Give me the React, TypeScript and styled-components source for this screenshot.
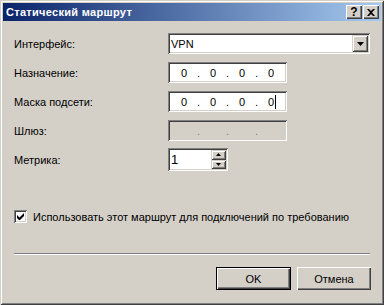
import styled, { createGlobalStyle } from 'styled-components';

const GlobalStyle = createGlobalStyle`
  html, body {
    margin: 0;
    padding: 0;
    background: #d4d0c8;
  }
  * {
    box-sizing: border-box;
  }
`;

const face = '#d4d0c8';

export default function App() {
  return (
    <>
      <GlobalStyle />
      <Window>
        <TitleBar>
          <Title>Статический маршрут</Title>
          <CaptionButton>
            <HelpGlyph>?</HelpGlyph>
          </CaptionButton>
          <CaptionButton>
            <svg width="8" height="7" viewBox="0 0 8 7">
              <path d="M0 0h2l2 2 2-2h2L5 3.5 8 7H6L4 5 2 7H0l3-3.5z" fill="#000" />
            </svg>
          </CaptionButton>
        </TitleBar>

        <Body>
          <Form>
            <Label>Интерфейс:</Label>
            <Combo>
              <ComboText>VPN</ComboText>
              <DropButton>
                <svg width="7" height="4" viewBox="0 0 7 4">
                  <path d="M0 0h7L3.5 4z" fill="#000" />
                </svg>
              </DropButton>
            </Combo>

            <Label>Назначение:</Label>
            <IpField octets={['0', '0', '0', '0']} />

            <Label>Маска подсети:</Label>
            <IpField octets={['0', '0', '0', '0']} caret />

            <Label>Шлюз:</Label>
            <IpField octets={['', '', '', '']} disabled />

            <Label>Метрика:</Label>
            <Spin>
              <SpinText>1</SpinText>
              <SpinButtons>
                <SpinButton>
                  <svg width="5" height="3" viewBox="0 0 5 3">
                    <path d="M2.5 0L5 3H0z" fill="#000" />
                  </svg>
                </SpinButton>
                <SpinButton>
                  <svg width="5" height="3" viewBox="0 0 5 3">
                    <path d="M0 0h5L2.5 3z" fill="#000" />
                  </svg>
                </SpinButton>
              </SpinButtons>
            </Spin>
          </Form>

          <CheckRow>
            <CheckBox>
              <svg width="7" height="7" viewBox="0 0 7 7">
                <path d="M0 2v3l2 2h1l4-4V0L2.5 4.5z" fill="#000" />
              </svg>
            </CheckBox>
            <span>Использовать этот маршрут для подключений по требованию</span>
          </CheckRow>

          <Separator />

          <Buttons>
            <Button $default>OK</Button>
            <Button>Отмена</Button>
          </Buttons>
        </Body>
      </Window>
    </>
  );
}

function IpField({ octets, disabled, caret }: { octets: string[]; disabled?: boolean; caret?: boolean }) {
  return (
    <IpBox $disabled={disabled}>
      {octets.map((o, i) => (
        <IpGroup key={i}>
          <Octet>
            {o}
            {caret && i === 3 && <Caret />}
          </Octet>
          {i < 3 && <Dot $disabled={disabled}>.</Dot>}
        </IpGroup>
      ))}
    </IpBox>
  );
}

const Window = styled.div`
  width: 384px;
  height: 305px;
  background: ${face};
  padding: 3px;
  display: flex;
  flex-direction: column;
  box-shadow: inset 1px 1px ${face}, inset -1px -1px #404040, inset 2px 2px #ffffff,
    inset -2px -2px #808080;
  font-family: 'Liberation Sans', Arial, sans-serif;
  font-size: 11px;
  color: #000;
`;

const TitleBar = styled.div`
  height: 18px;
  display: flex;
  align-items: center;
  padding: 0 2px 0 3px;
  gap: 1px;
  background: linear-gradient(to right, #0a246a, #a6caf0);
`;

const Title = styled.div`
  flex: 1;
  color: #ffffff;
  font-weight: bold;
  font-size: 11px;
  letter-spacing: 0.3px;
`;

const raised = `
  background: ${face};
  box-shadow: inset 1px 1px #ffffff, inset -1px -1px #404040, inset -2px -2px #808080;
`;

const CaptionButton = styled.div`
  width: 16px;
  height: 14px;
  display: flex;
  align-items: center;
  justify-content: center;
  ${raised}
`;

const HelpGlyph = styled.span`
  font-weight: bold;
  font-size: 12px;
  line-height: 12px;
  margin-top: -1px;
`;

const Body = styled.div`
  flex: 1;
  display: flex;
  flex-direction: column;
  padding: 12px 10px 0 11px;
`;

const Form = styled.div`
  display: grid;
  grid-template-columns: 154px 202px;
  grid-auto-rows: 21px;
  row-gap: 8px;
  align-items: center;
`;

const Label = styled.div`
  white-space: nowrap;
`;

const sunken = `
  box-shadow: inset 1px 1px #808080, inset -1px -1px #ffffff, inset 2px 2px #404040,
    inset -2px -2px ${face};
`;

const Combo = styled.div`
  height: 21px;
  width: 202px;
  background: #ffffff;
  ${sunken}
  display: flex;
  align-items: center;
  padding: 2px;
`;

const ComboText = styled.div`
  flex: 1;
  padding-left: 1px;
`;

const DropButton = styled.div`
  width: 16px;
  height: 17px;
  display: flex;
  align-items: center;
  justify-content: center;
  background: ${face};
  box-shadow: inset 1px 1px ${face}, inset -1px -1px #404040, inset 2px 2px #ffffff,
    inset -2px -2px #808080;
`;

const IpBox = styled.div<{ $disabled?: boolean }>`
  width: 119px;
  height: 21px;
  background: ${(p) => (p.$disabled ? face : '#ffffff')};
  ${sunken}
  display: flex;
  align-items: center;
  padding-left: 4px;
`;

const IpGroup = styled.div`
  display: flex;
  align-items: center;
`;

const Octet = styled.div`
  width: 24px;
  text-align: center;
  position: relative;
`;

const Caret = styled.span`
  position: absolute;
  top: -1px;
  left: 16px;
  width: 1px;
  height: 14px;
  background: #000;
`;

const Dot = styled.div<{ $disabled?: boolean }>`
  width: 5px;
  text-align: center;
  color: ${(p) => (p.$disabled ? '#808080' : '#000')};
`;

const Spin = styled.div`
  width: 60px;
  height: 23px;
  background: #ffffff;
  ${sunken}
  display: flex;
  padding: 2px;
`;

const SpinText = styled.div`
  flex: 1;
  font-size: 13px;
  line-height: 19px;
  padding-left: 1px;
`;

const SpinButtons = styled.div`
  width: 15px;
  display: flex;
  flex-direction: column;
`;

const SpinButton = styled.div`
  flex: 1;
  display: flex;
  align-items: center;
  justify-content: center;
  background: ${face};
  box-shadow: inset 1px 1px ${face}, inset -1px -1px #404040, inset 2px 2px #ffffff,
    inset -2px -2px #808080;
`;

const CheckRow = styled.div`
  display: flex;
  align-items: center;
  gap: 6px;
  margin-top: 40px;
`;

const CheckBox = styled.div`
  width: 13px;
  height: 13px;
  background: #ffffff;
  ${sunken}
  display: flex;
  align-items: center;
  justify-content: center;
`;

const Separator = styled.div`
  margin-top: 30px;
  height: 2px;
  width: 356px;
  border-top: 1px solid #808080;
  border-bottom: 1px solid #ffffff;
`;

const Buttons = styled.div`
  display: flex;
  justify-content: flex-end;
  gap: 6px;
  margin-top: 12px;
`;

const Button = styled.div<{ $default?: boolean }>`
  width: ${(p) => (p.$default ? 75 : 74)}px;
  height: 23px;
  display: flex;
  align-items: center;
  justify-content: center;
  background: ${face};
  box-shadow: ${(p) =>
    p.$default
      ? `inset 0 0 0 1px #000000, inset 2px 2px #ffffff, inset -2px -2px #404040, inset -3px -3px #808080`
      : `inset 1px 1px #ffffff, inset -1px -1px #404040, inset -2px -2px #808080`};
`;
